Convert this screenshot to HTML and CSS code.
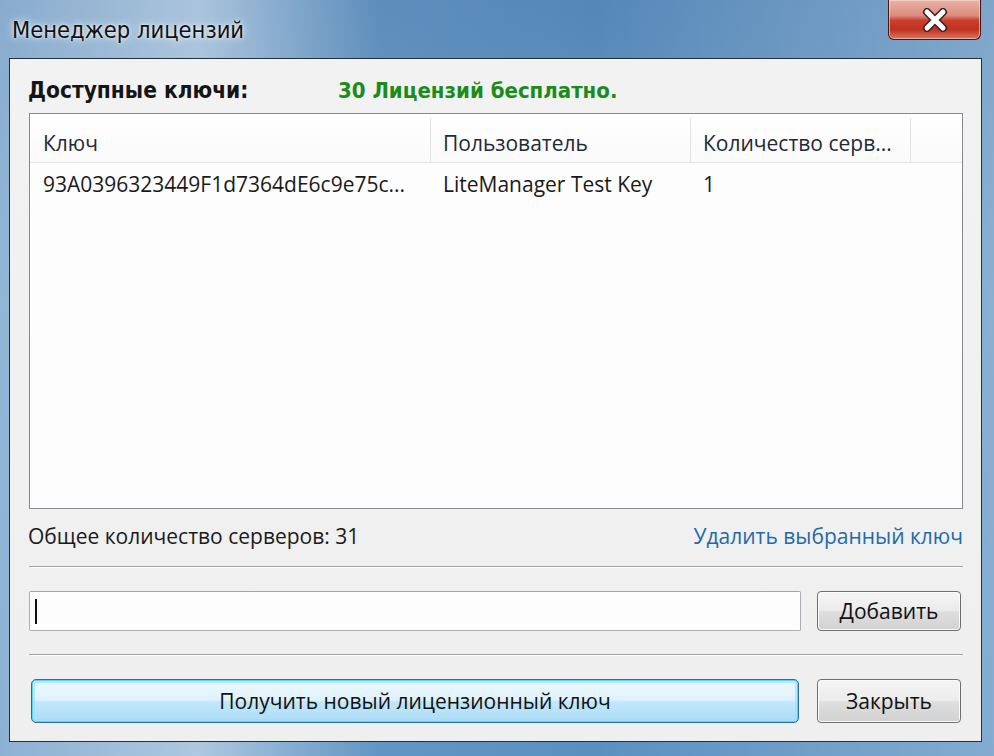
FILE: index.html
```html
<!DOCTYPE html>
<html lang="ru">
<head>
<meta charset="utf-8">
<title>Менеджер лицензий</title>
<link rel="stylesheet" href="styles.css">
</head>
<body>
<div class="window">
  <div class="titlebar">
    <div class="title">Менеджер лицензий</div>
    <div class="close-btn">
      <svg width="34" height="24" viewBox="0 0 34 24">
        <path d="M9 4 L25 20 M25 4 L9 20" stroke="#3a2020" stroke-width="8" stroke-linecap="round"/>
        <path d="M9 4 L25 20 M25 4 L9 20" stroke="#ffffff" stroke-width="5" stroke-linecap="round"/>
      </svg>
    </div>
  </div>
  <div class="client">
    <div class="avail">
      <span class="avail-label">Доступные ключи:</span>
      <span class="avail-free">30 Лицензий бесплатно.</span>
    </div>
    <div class="list">
      <div class="list-head">
        <div class="col col-key">Ключ</div>
        <div class="col col-user">Пользователь</div>
        <div class="col col-count">Количество серв...</div>
        <div class="col col-fill"></div>
      </div>
      <div class="list-row">
        <div class="cell col-key">93A0396323449F1d7364dE6c9e75c...</div>
        <div class="cell col-user">LiteManager Test Key</div>
        <div class="cell col-count">1</div>
      </div>
    </div>
    <div class="summary">
      <span class="total">Общее количество серверов: 31</span>
      <span class="link">Удалить выбранный ключ</span>
    </div>
    <div class="sep"></div>
    <div class="add-row">
      <div class="textbox"><span class="caret"></span></div>
      <div class="btn btn-side"><span class="acc">Д</span>обавить</div>
    </div>
    <div class="sep"></div>
    <div class="bottom-row">
      <div class="btn btn-default">Получить новый лицензионный ключ</div>
      <div class="btn btn-side">Закрыть</div>
    </div>
  </div>
</div>
</body>
</html>
```

FILE: styles.css
```css
* { box-sizing: border-box; }
html, body { margin: 0; padding: 0; }
body {
  width: 994px;
  height: 756px;
  overflow: hidden;
  font-family: "Open Sans", "DejaVu Sans", sans-serif;
  font-size: 21px;
  color: #1a1a1a;
}
.window {
  width: 994px;
  height: 756px;
  display: flex;
  flex-direction: column;
  background:
    linear-gradient(90deg, rgba(255,255,255,0.3) 0%, rgba(255,255,255,0.5) 20%, rgba(255,255,255,0.05) 38%, rgba(255,255,255,0) 60%, rgba(255,255,255,0.25) 100%),
    linear-gradient(180deg, #5588b8 0%, #6396c3 40%, #5a90c0 100%);
}
.titlebar {
  height: 58px;
  flex: none;
  display: flex;
  justify-content: space-between;
  align-items: flex-start;
}
.title {
  padding: 16px 0 0 12px;
  font-family: "DejaVu Sans Condensed", "DejaVu Sans", sans-serif;
  font-stretch: condensed;
  font-size: 23.5px;
  line-height: 28px;
  color: #111;
  text-shadow: 0 0 8px rgba(255,255,255,0.9), 0 0 3px rgba(255,255,255,0.9);
}
.close-btn {
  width: 93px;
  height: 40px;
  margin-right: 13px;
  border: 1px solid #3c1a16;
  border-top: none;
  border-radius: 0 0 6px 6px;
  display: flex;
  align-items: center;
  justify-content: center;
  background: linear-gradient(180deg, #e9b3a8 0%, #dc8c7e 40%, #c9402f 52%, #c0301f 75%, #d8765f 100%);
  box-shadow: inset 0 0 0 1px rgba(255,220,210,0.6);
}
.client {
  flex: 1;
  margin: 0 12px 14px 9px;
  border: 1px solid #22303c;
  background: linear-gradient(180deg, #f2f2f2 0%, #efefef 100%);
  padding: 0 18px 0 18px;
  display: flex;
  flex-direction: column;
}
.avail {
  height: 54px;
  flex: none;
  display: flex;
  align-items: center;
  padding-top: 8px;
  font-family: "DejaVu Sans Condensed", "DejaVu Sans", sans-serif;
  font-stretch: condensed;
  font-weight: bold;
  font-size: 22.5px;
}
.avail-label { width: 310px; color: #151515; }
.avail-free { color: #1a8c1a; font-size: 22px; }
.list {
  height: 396px;
  flex: none;
  margin-left: 1px;
  border: 1px solid #858990;
  background: #fdfdfd;
}
.list-head {
  height: 49px;
  display: flex;
  border-bottom: 1px solid #e3e3e3;
  background: linear-gradient(180deg, #ffffff 0%, #fafafa 100%);
}
.col {
  display: flex;
  align-items: center;
  padding-top: 6px;
  color: #1e2a36;
  border-right: 1px solid #e2e2e2;
  margin: 4px 0 0 0;
  white-space: nowrap;
}
.col-key { width: 401px; padding-left: 13px; }
.col-user { width: 260px; padding-left: 12px; }
.col-count { width: 220px; padding-left: 12px; }
.col-fill { flex: 1; border-right: none; }
.list-row {
  height: 42px;
  display: flex;
  align-items: center;
}
.cell { white-space: nowrap; }
.summary {
  height: 28px;
  flex: none;
  margin: 13px 0 16px 0;
  display: flex;
  align-items: center;
  justify-content: space-between;
}
.total { color: #1a1a1a; }
.link { color: #1f6aa8; }
.sep {
  height: 2px;
  flex: none;
  margin-left: 1px;
  border-top: 1px solid #a0a0a0;
  border-bottom: 1px solid #ffffff;
}
.add-row {
  height: 40px;
  flex: none;
  margin: 23px 0 23px 1px;
  display: flex;
  gap: 16px;
}
.textbox {
  flex: 1;
  border: 1px solid #abadb3;
  border-top-color: #a0a3aa;
  border-radius: 2px;
  background: #fdfdfd;
  position: relative;
}
.caret {
  position: absolute;
  left: 5px;
  top: 7px;
  width: 2px;
  height: 25px;
  background: #111;
}
.btn {
  display: flex;
  align-items: center;
  justify-content: center;
  border: 1px solid #6f6f6f;
  border-radius: 4px;
  color: #111;
  font-size: 21px;
  background: linear-gradient(180deg, #f4f4f4 0%, #ececec 48%, #dedede 52%, #d2d2d2 100%);
  box-shadow: inset 0 0 0 1px #fbfbfb;
}
.btn-side { width: 144px; margin-right: 2px; }
.acc { text-decoration: underline; text-underline-offset: 3px; }
.bottom-row {
  height: 44px;
  flex: none;
  margin: 23px 0 0 3px;
  display: flex;
  gap: 18px;
}
.btn-default {
  flex: 1;
  border: 1px solid #2d6e98;
  border-radius: 5px;
  background: linear-gradient(180deg, #eef8fd 0%, #def2fc 48%, #c2e7fb 52%, #abdcf6 100%);
  box-shadow: inset 0 0 0 1px #63d2f2, inset 0 0 0 3px rgba(150,225,250,0.6);
}
```
